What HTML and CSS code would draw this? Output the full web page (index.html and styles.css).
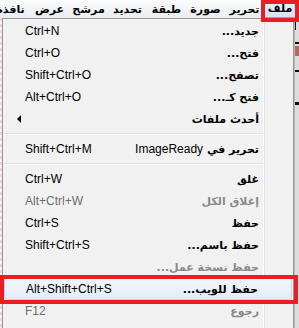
FILE: index.html
```html
<!DOCTYPE html>
<html lang="ar">
<head>
<meta charset="utf-8">
<link rel="stylesheet" href="styles.css">
</head>
<body>
<div class="screen">
  <div class="menubar">
    <span class="mi mi-active">ملف</span>
    <span class="mi">تحرير</span>
    <span class="mi">صورة</span>
    <span class="mi">طبقة</span>
    <span class="mi">تحديد</span>
    <span class="mi">مرشح</span>
    <span class="mi">عرض</span>
    <span class="mi">نافذة</span>
  </div>
  <div class="main">
    <div class="leftstrip"></div>
    <div class="menu">
      <div class="row"><span class="key">Ctrl+N</span><span class="lbl">جديد...</span></div>
      <div class="row"><span class="key">Ctrl+O</span><span class="lbl">فتح...</span></div>
      <div class="row"><span class="key">Shift+Ctrl+O</span><span class="lbl">تصفح...</span></div>
      <div class="row"><span class="key">Alt+Ctrl+O</span><span class="lbl">فتح كـ...</span></div>
      <div class="row"><span class="arrow"></span><span class="lbl">أحدث ملفات</span></div>
      <div class="sep"></div>
      <div class="row"><span class="key">Shift+Ctrl+M</span><span class="lbl">تحرير في <span class="latin">ImageReady</span></span></div>
      <div class="sep"></div>
      <div class="row"><span class="key">Ctrl+W</span><span class="lbl">غلق</span></div>
      <div class="row dis"><span class="key">Alt+Ctrl+W</span><span class="lbl">إغلاق الكل</span></div>
      <div class="row"><span class="key">Ctrl+S</span><span class="lbl">حفظ</span></div>
      <div class="row"><span class="key">Shift+Ctrl+S</span><span class="lbl">حفظ باسم...</span></div>
      <div class="row dis"><span class="key"></span><span class="lbl">حفظ نسخة عمل...</span></div>
      <div class="row hl"><span class="key">Alt+Shift+Ctrl+S</span><span class="lbl">حفظ للويب...</span></div>
      <div class="row dis"><span class="key">F12</span><span class="lbl">رجوع</span></div>
    </div>
    <div class="rightstrip">
      <div class="rs-mark rs-a"></div>
      <div class="rs-mark rs-b"></div>
      <div class="rs-img"></div>
      <div class="rs-mark rs-c"></div>
      <div class="rs-mark rs-d"></div>
    </div>
  </div>
  <div class="mark mark-file"></div>
  <div class="mark mark-web"></div>
</div>
</body>
</html>
```
FILE: styles.css
```css
html, body {
  margin: 0;
  padding: 0;
}
body {
  width: 299px;
  height: 328px;
  overflow: hidden;
  background: #f0f0f0;
}
.screen {
  position: relative;
  width: 299px;
  height: 328px;
  display: flex;
  flex-direction: column;
  font-family: "DejaVu Sans", "Liberation Sans", sans-serif;
}
.menubar {
  height: 18px;
  display: flex;
  direction: rtl;
  align-items: stretch;
  background: linear-gradient(#fbfcfd, #e9edf2);
  padding-right: 3px;
  overflow: hidden;
  white-space: nowrap;
}
.mi {
  flex: none;
  width: 39px;
  font-size: 11px;
  font-weight: bold;
  color: #000;
  display: flex;
  justify-content: center;
  align-items: center;
  line-height: 1;
  box-sizing: border-box;
}
.mi-active {
  width: 32px;
  background: linear-gradient(#eaf1fa, #d3e2f3);
  border: 1px solid #8ea7c7;
  border-top: none;
}
.main {
  flex: 1;
  display: flex;
  min-height: 0;
}
.leftstrip {
  width: 2px;
  background: repeating-linear-gradient(#f0d4d4 0 3px, #f4f4f4 3px 6px);
}
.menu {
  flex: 1;
  border-left: 1px solid #979797;
  border-right: 1px solid #979797;
  border-top: 1px solid #979797;
  padding-top: 1px;
  background: linear-gradient(to left, #f1f1f1 28px, #e2e3e3 28px, #e2e3e3 29px, #ffffff 29px, #ffffff 30px, #f1f1f1 30px);
  display: flex;
  flex-direction: column;
}
.row {
  height: 22px;
  flex: none;
  display: flex;
  justify-content: space-between;
  align-items: center;
  padding: 0 34px 0 22px;
  box-sizing: border-box;
  color: #000;
}
.key {
  font-family: "Liberation Sans", Arial, sans-serif;
  font-size: 12px;
}
.lbl {
  font-family: "DejaVu Sans", sans-serif;
  font-size: 11px;
  font-weight: bold;
  direction: rtl;
  white-space: nowrap;
}
.latin {
  font-family: "Liberation Sans", Arial, sans-serif;
  font-weight: normal;
  font-size: 12px;
}
.dis {
  color: #6d6d6d;
}
.dis .lbl {
  color: #8a8a8a;
}
.arrow {
  width: 0;
  height: 0;
  border-top: 4px solid transparent;
  border-bottom: 4px solid transparent;
  border-right: 4px solid #000;
  margin-left: -8px;
}
.sep {
  flex: none;
  height: 8px;
  margin-right: 30px;
  margin-left: 1px;
  background: linear-gradient(transparent 3px, #e0e0e0 3px, #e0e0e0 4px, #ffffff 4px, #ffffff 5px, transparent 5px);
}
.hl {
  margin: 0 1px;
  padding: 0 33px 0 21px;
  border: 1px solid #c3d5ea;
  border-radius: 3px;
  background: linear-gradient(#f2f6fb, #e3ecf7);
}
.rightstrip {
  width: 4px;
  background: #dcdcdc;
  border-left: 1px solid #b8b8b8;
  display: flex;
  flex-direction: column;
}
.rs-mark {
  height: 2px;
  background: #111;
}
.rs-a { margin-top: 2px; height: 10px; width: 1px; }
.rs-b { margin-top: 12px; }
.rs-img { margin-top: 2px; height: 10px; background: #b86a5a; }
.rs-c { margin-top: 14px; }
.rs-d { margin-top: 30px; height: 3px; }
.mark {
  position: absolute;
  border: 4px solid #ec1c24;
  box-sizing: border-box;
  pointer-events: none;
}
.mark-file {
  left: 261px;
  top: 0;
  width: 38px;
  height: 22px;
}
.mark-web {
  left: 0;
  top: 275px;
  width: 298px;
  height: 29px;
}
```
